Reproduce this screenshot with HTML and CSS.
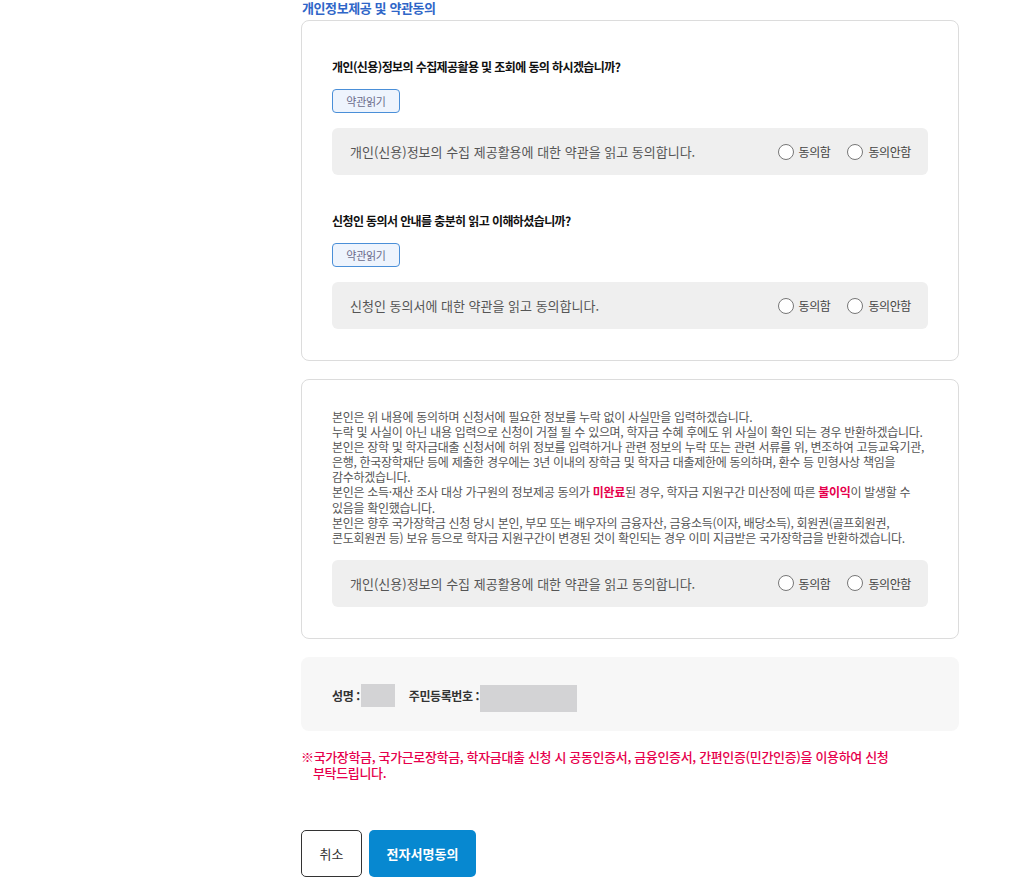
FILE: index.html
```html
<!DOCTYPE html>
<html lang="ko">
<head>
    <meta charset="UTF-8">
    <meta name="viewport" content="width=device-width, initial-scale=1.0">
    <title>개인정보제공 및 약관동의</title>
    <link rel="stylesheet" href="styles.css">
</head>
<body>
    <div class="wrap">
        <h2 class="title">개인정보제공 및 약관동의</h2>

        <div class="box">
            <p class="question">개인(신용)정보의 수집제공활용 및 조회에 동의 하시겠습니까?</p>
            <button class="btn-read" type="button">약관읽기</button>
            <div class="agree-row">
                <span class="agree-text">개인(신용)정보의 수집 제공활용에 대한 약관을 읽고 동의합니다.</span>
                <div class="radios">
                    <label class="radio"><input type="radio" name="agree1"><span>동의함</span></label>
                    <label class="radio"><input type="radio" name="agree1"><span>동의안함</span></label>
                </div>
            </div>

            <p class="question q2">신청인 동의서 안내를 충분히 읽고 이해하셨습니까?</p>
            <button class="btn-read" type="button">약관읽기</button>
            <div class="agree-row">
                <span class="agree-text">신청인 동의서에 대한 약관을 읽고 동의합니다.</span>
                <div class="radios">
                    <label class="radio"><input type="radio" name="agree2"><span>동의함</span></label>
                    <label class="radio"><input type="radio" name="agree2"><span>동의안함</span></label>
                </div>
            </div>
        </div>

        <div class="box box-notice">
            <p class="notice">
                본인은 위 내용에 동의하며 신청서에 필요한 정보를 누락 없이 사실만을 입력하겠습니다.<br>
                누락 및 사실이 아닌 내용 입력으로 신청이 거절 될 수 있으며, 학자금 수혜 후에도 위 사실이 확인 되는 경우 반환하겠습니다.<br>
                본인은 장학 및 학자금대출 신청서에 허위 정보를 입력하거나 관련 정보의 누락 또는 관련 서류를 위, 변조하여 고등교육기관,<br>
                은행, 한국장학재단 등에 제출한 경우에는 3년 이내의 장학금 및 학자금 대출제한에 동의하며, 환수 등 민형사상 책임을<br>
                감수하겠습니다.<br>
                본인은 소득·재산 조사 대상 가구원의 정보제공 동의가 <em class="red">미완료</em>된 경우, 학자금 지원구간 미산정에 따른 <em class="red">불이익</em>이 발생할 수<br>
                있음을 확인했습니다.<br>
                본인은 향후 국가장학금 신청 당시 본인, 부모 또는 배우자의 금융자산, 금융소득(이자, 배당소득), 회원권(골프회원권,<br>
                콘도회원권 등) 보유 등으로 학자금 지원구간이 변경된 것이 확인되는 경우 이미 지급받은 국가장학금을 반환하겠습니다.
            </p>
            <div class="agree-row">
                <span class="agree-text">개인(신용)정보의 수집 제공활용에 대한 약관을 읽고 동의합니다.</span>
                <div class="radios">
                    <label class="radio"><input type="radio" name="agree3"><span>동의함</span></label>
                    <label class="radio"><input type="radio" name="agree3"><span>동의안함</span></label>
                </div>
            </div>
        </div>

        <div class="sign-info">
            <span class="info-label">성명 :</span>
            <span class="mask mask-name"></span>
            <span class="info-label info-id">주민등록번호 :</span>
            <span class="mask mask-id"></span>
        </div>

        <p class="warn">※국가장학금, 국가근로장학금, 학자금대출 신청 시 공동인증서, 금융인증서, 간편인증(민간인증)을 이용하여 신청 부탁드립니다.</p>

        <div class="btn-area">
            <button class="btn-cancel" type="button">취소</button>
            <button class="btn-sign" type="button">전자서명동의</button>
        </div>
    </div>
</body>
</html>
```

FILE: styles.css
```css
body {
    margin: 0;
    background: #fff;
    font-family: "Noto Sans CJK KR", "Noto Sans", sans-serif;
    color: #333;
}

.wrap {
    width: 658px;
    margin-left: 301px;
}

.title {
    margin: 0;
    padding-left: 1px;
    font-size: 13px;
    line-height: 16px;
    font-weight: bold;
    color: #2f66c8;
    letter-spacing: -0.4px;
}

.box {
    margin-top: 4px;
    padding: 37px 30px 31px;
    border: 1px solid #dcdcdc;
    border-radius: 8px;
}

.question {
    margin: 0;
    font-size: 12px;
    line-height: 18px;
    font-weight: bold;
    color: #111;
    letter-spacing: -0.6px;
}

.question.q2 {
    margin-top: 37px;
}

.btn-read {
    display: block;
    margin-top: 13px;
    width: 68px;
    height: 24px;
    padding: 0;
    border: 1px solid #4a8fd8;
    border-radius: 4px;
    background: #eef4fd;
    font-family: inherit;
    font-size: 11px;
    color: #6a6a8a;
    letter-spacing: -0.3px;
    cursor: pointer;
}

.agree-row {
    display: flex;
    align-items: center;
    justify-content: space-between;
    margin-top: 15px;
    height: 47px;
    padding: 0 17px 0 18px;
    background: #efefef;
    border-radius: 6px;
}

.agree-text {
    font-size: 13px;
    color: #555;
}

.radios {
    display: flex;
    gap: 17px;
}

.radio {
    display: flex;
    align-items: center;
    gap: 5px;
    font-size: 12px;
    color: #444;
    letter-spacing: -0.4px;
    cursor: pointer;
}

.radio input {
    appearance: none;
    margin: 0;
    width: 16px;
    height: 16px;
    border: 1px solid #777;
    border-radius: 50%;
    background: #fff;
}

.box-notice {
    margin-top: 18px;
    padding-top: 29px;
}

.notice {
    margin: 0;
    font-size: 12px;
    line-height: 15.1px;
    color: #555;
    letter-spacing: -0.3px;
}

.red {
    font-style: normal;
    font-weight: bold;
    color: #e6004c;
}

.sign-info {
    display: flex;
    align-items: center;
    margin-top: 18px;
    height: 74px;
    padding: 4px 31px 0;
    box-sizing: border-box;
    background: #f7f7f7;
    border-radius: 8px;
}

.info-label {
    font-size: 12px;
    font-weight: bold;
    color: #333;
    letter-spacing: -0.4px;
}

.info-id {
    margin-left: 14px;
}

.mask {
    display: inline-block;
    margin-left: 1px;
    background: #d3d3d5;
}

.mask-name {
    width: 34px;
    height: 23px;
}

.mask-id {
    width: 97px;
    height: 27px;
    margin-top: 5px;
}

.warn {
    max-width: 600px;
    margin: 18px 0 0;
    padding-left: 12px;
    text-indent: -12px;
    font-size: 13px;
    line-height: 16px;
    font-weight: 500;
    color: #e6004c;
    letter-spacing: -0.35px;
    word-break: keep-all;
}

.btn-area {
    display: flex;
    gap: 7px;
    margin-top: 49px;
}

.btn-cancel,
.btn-sign {
    height: 47px;
    padding: 0;
    border-radius: 5px;
    font-family: inherit;
    font-size: 13px;
    cursor: pointer;
}

.btn-cancel {
    width: 61px;
    border: 1px solid #333;
    background: #fff;
    color: #333;
}

.btn-sign {
    width: 107px;
    border: none;
    background: #0788d0;
    color: #fff;
    font-weight: bold;
}
```
